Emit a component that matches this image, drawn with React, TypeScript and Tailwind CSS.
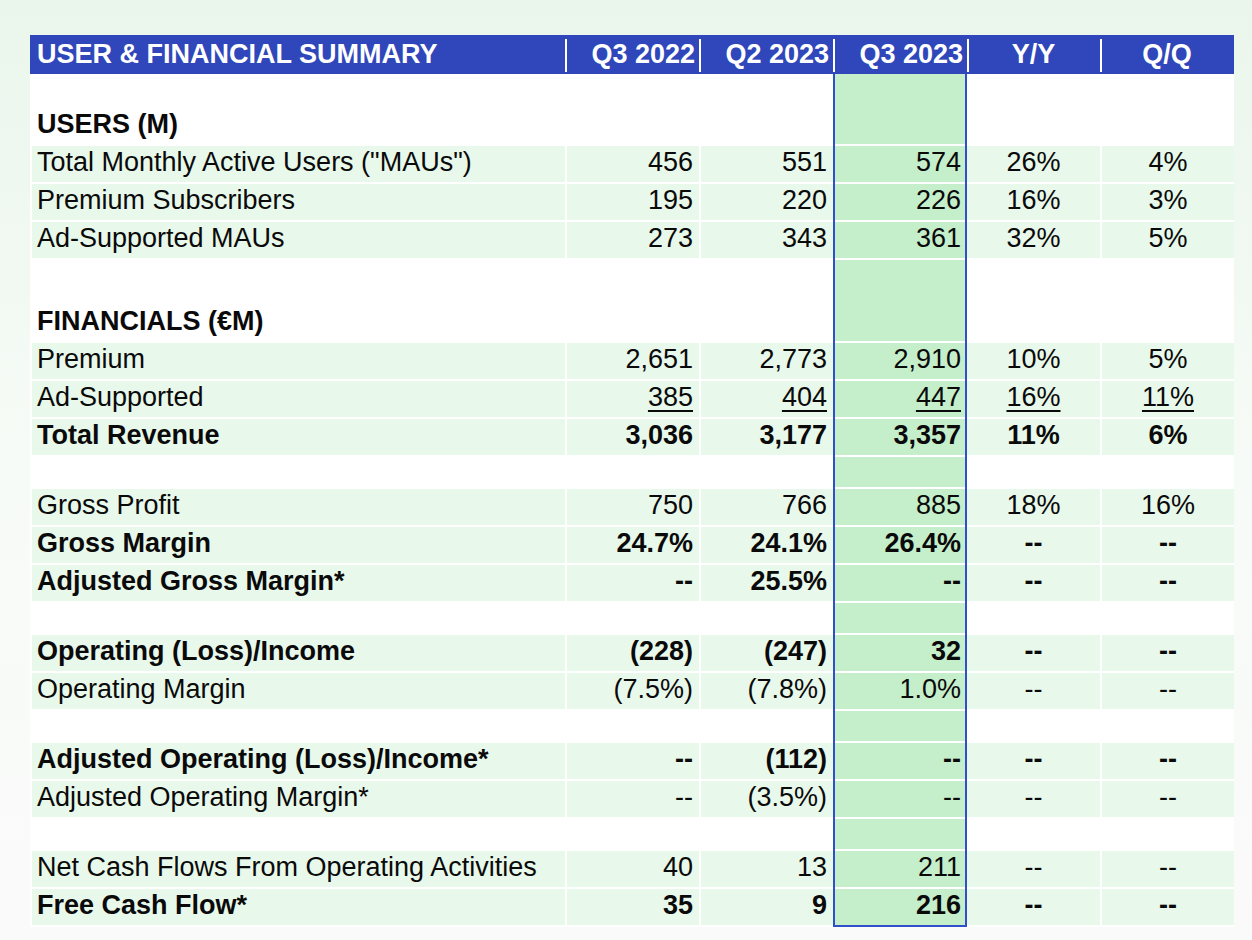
import React from "react";

type Row =
  | { kind: "spacer"; h: string; gap?: boolean }
  | { kind: "section"; label: string }
  | { kind: "data"; label: string; vals: string[]; bold?: boolean; underline?: boolean };

const rows: Row[] = [
  { kind: "spacer", h: "h-[34px]" },
  { kind: "section", label: "USERS (M)" },
  { kind: "data", label: 'Total Monthly Active Users ("MAUs")', vals: ["456", "551", "574", "26%", "4%"] },
  { kind: "data", label: "Premium Subscribers", vals: ["195", "220", "226", "16%", "3%"] },
  { kind: "data", label: "Ad-Supported MAUs", vals: ["273", "343", "361", "32%", "5%"] },
  { kind: "spacer", h: "h-[45px]" },
  { kind: "section", label: "FINANCIALS (€M)" },
  { kind: "data", label: "Premium", vals: ["2,651", "2,773", "2,910", "10%", "5%"] },
  { kind: "data", label: "Ad-Supported", vals: ["385", "404", "447", "16%", "11%"], underline: true },
  { kind: "data", label: "Total Revenue", vals: ["3,036", "3,177", "3,357", "11%", "6%"], bold: true },
  { kind: "spacer", h: "h-[30px]", gap: true },
  { kind: "data", label: "Gross Profit", vals: ["750", "766", "885", "18%", "16%"] },
  { kind: "data", label: "Gross Margin", vals: ["24.7%", "24.1%", "26.4%", "--", "--"], bold: true },
  { kind: "data", label: "Adjusted Gross Margin*", vals: ["--", "25.5%", "--", "--", "--"], bold: true },
  { kind: "spacer", h: "h-[30px]", gap: true },
  { kind: "data", label: "Operating (Loss)/Income", vals: ["(228)", "(247)", "32", "--", "--"], bold: true },
  { kind: "data", label: "Operating Margin", vals: ["(7.5%)", "(7.8%)", "1.0%", "--", "--"] },
  { kind: "spacer", h: "h-[30px]", gap: true },
  { kind: "data", label: "Adjusted Operating (Loss)/Income*", vals: ["--", "(112)", "--", "--", "--"], bold: true },
  { kind: "data", label: "Adjusted Operating Margin*", vals: ["--", "(3.5%)", "--", "--", "--"] },
  { kind: "spacer", h: "h-[30px]", gap: true },
  { kind: "data", label: "Net Cash Flows From Operating Activities", vals: ["40", "13", "211", "--", "--"] },
  { kind: "data", label: "Free Cash Flow*", vals: ["35", "9", "216", "--", "--"], bold: true },
];

const cols = "grid grid-cols-[535px_134px_134px_134px_133px_134px]";

function HeaderRow() {
  const heads = ["Q3 2022", "Q2 2023", "Q3 2023", "Y/Y", "Q/Q"];
  return (
    <div className={`${cols} h-[39px] bg-[#2f47ba] text-white font-bold text-[27px]`}>
      <div className="flex items-center pl-[7px] pb-[1px]">USER &amp; FINANCIAL SUMMARY</div>
      {heads.map((h, i) => (
        <div key={h} className="flex items-stretch">
          <div className="w-[2px] mt-[4px] mb-[2px] bg-white" />
          <div className={`flex-1 flex items-center pb-[1px] ${i < 3 ? "justify-end pr-[4px]" : "justify-center pr-[2px]"}`}>{h}</div>
        </div>
      ))}
    </div>
  );
}

function TableRow({ row, last }: { row: Row; last: boolean }) {
  const gap = row.kind === "spacer" ? row.gap : true;
  const pb = gap && !last ? "pb-[2px]" : "";
  const h = row.kind === "spacer" ? row.h : "h-[36px]";
  const rowBg = row.kind === "data" ? "bg-[#e8f8ea]" : "";
  const weight = row.kind !== "spacer" && (row.kind === "section" || row.bold) ? "font-bold" : "font-normal";
  const vals = row.kind === "data" ? row.vals : ["", "", "", "", ""];
  const ul = row.kind === "data" && row.underline ? "underline decoration-2 underline-offset-[4px]" : "";

  return (
    <div className={cols}>
      <div className={`pl-[2px] ${pb}`}>
        <div className={`${h} ${rowBg} ${weight} flex items-center pl-[5px] pb-[3px]`}>
          {row.kind !== "spacer" ? row.label : null}
        </div>
      </div>
      {vals.map((v, i) => {
        const hi = i === 2;
        const outer = hi
          ? `border-x-2 border-[#2f4fcb] bg-white ${last ? "border-b-2" : ""} ${pb}`
          : `${i === 3 ? "" : "pl-[2px]"} ${pb}`;
        const bg = hi ? "bg-[#c4efca]" : rowBg;
        const align = i < 3 ? "justify-end pr-[4px]" : "justify-center";
        return (
          <div key={i} className={outer}>
            <div className={`${h} ${bg} ${weight} flex items-center pb-[3px] ${align} ${i < 2 ? "pr-[6px]" : ""}`}>
              {v ? <span className={ul}>{v}</span> : null}
            </div>
          </div>
        );
      })}
    </div>
  );
}

export default function App() {
  return (
    <div className="min-h-screen w-full bg-gradient-to-b from-[#eaf6ec] via-[#f7fbf7] to-[#fafafa] pt-[35px] pl-[30px] pb-[13px] font-['Liberation_Sans',Arial,sans-serif] text-[27px] text-[#0a0a0a] leading-none">
      <div className="w-[1204px] bg-white">
        <HeaderRow />
        {rows.map((r, i) => (
          <TableRow key={i} row={r} last={i === rows.length - 1} />
        ))}
      </div>
    </div>
  );
}
